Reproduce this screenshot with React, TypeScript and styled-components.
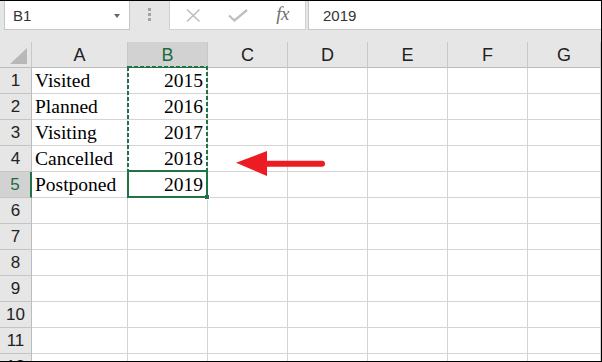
import React from "react";
import styled, { createGlobalStyle } from "styled-components";

const GlobalStyle = createGlobalStyle`
  html, body {
    margin: 0;
    padding: 0;
    background: #ffffff;
  }
  * {
    box-sizing: border-box;
  }
`;

const GREEN = "#217346";

const Frame = styled.div`
  width: 602px;
  height: 362px;
  border-top: 1px solid #000;
  border-right: 1px solid #000;
  border-bottom: 1px solid #000;
  background: #e6e6e6;
  display: flex;
  flex-direction: column;
  overflow: hidden;
  font-family: "Liberation Sans", Arial, sans-serif;
`;

const Toolbar = styled.div`
  height: 41px;
  flex: 0 0 41px;
  display: flex;
  align-items: flex-start;
  padding-left: 4px;
`;

const NameBox = styled.div`
  width: 126px;
  height: 29px;
  background: #fff;
  border: 1px solid #c6c6c6;
  border-top: none;
  display: flex;
  align-items: center;
  justify-content: space-between;
  padding: 1px 9px 0 8px;
  font-size: 15px;
  color: #333;
`;

const DropArrow = styled.span`
  width: 0;
  height: 0;
  border-left: 3.5px solid transparent;
  border-right: 3.5px solid transparent;
  border-top: 4px solid #666;
  margin-top: 1px;
`;

const Handle = styled.div`
  width: 39px;
  display: flex;
  flex-direction: column;
  align-items: center;
  gap: 2px;
  padding-top: 7px;
`;

const Dot = styled.span`
  width: 3px;
  height: 3px;
  background: #a3a3a3;
`;

const FxBox = styled.div`
  width: 137px;
  height: 29px;
  background: #fff;
  border: 1px solid #d0d0d0;
  border-top: none;
  display: flex;
  align-items: center;
`;

const IconSlot = styled.div`
  width: 45px;
  display: flex;
  justify-content: center;
  align-items: center;
`;

const FxLabel = styled.span`
  font-family: "Liberation Serif", "Times New Roman", serif;
  font-style: italic;
  font-size: 19px;
  color: #6f6f6f;
  letter-spacing: -0.5px;
  margin-top: -2px;
`;

const FormulaInput = styled.div`
  flex: 1;
  height: 29px;
  margin-left: 2px;
  background: #fff;
  border-left: 1px solid #c6c6c6;
  border-bottom: 1px solid #c6c6c6;
  display: flex;
  align-items: center;
  padding: 1px 0 0 14px;
  font-size: 15px;
  color: #333;
`;

const Sheet = styled.div`
  position: relative;
  flex: 1;
  display: grid;
  grid-template-columns: 32px 96px repeat(5, 80px) 1fr;
  grid-auto-rows: 26px;
  background: #fff;
  overflow: hidden;
`;

const Corner = styled.div`
  background: #e6e6e6;
  border-right: 1px solid #c8c8c8;
  border-bottom: 1px solid #bcbcbc;
  display: flex;
  align-items: flex-end;
  justify-content: flex-end;
  padding: 0 4px 3px 0;
`;

const CornerTriangle = styled.span`
  width: 17px;
  height: 16px;
  background: #b8b8b8;
  clip-path: polygon(100% 0, 100% 100%, 0 100%);
`;

const ColHead = styled.div<{ $active?: boolean }>`
  background: ${(p) => (p.$active ? "#d2d2d2" : "#e6e6e6")};
  border-right: 1px solid #c8c8c8;
  border-bottom: 1px solid ${(p) => (p.$active ? GREEN : "#bcbcbc")};
  color: ${(p) => (p.$active ? "#1d6a40" : "#222")};
  font-size: 18px;
  line-height: 25px;
  padding-top: 1px;
  text-align: center;
`;

const RowHead = styled.div<{ $active?: boolean }>`
  background: ${(p) => (p.$active ? "#d2d2d2" : "#e6e6e6")};
  border-right: ${(p) => (p.$active ? `2px solid ${GREEN}` : "1px solid #bcbcbc")};
  border-bottom: 1px solid #c4c4c4;
  color: ${(p) => (p.$active ? "#1d6a40" : "#222")};
  font-size: 17px;
  line-height: 25px;
  text-align: center;
`;

const Cell = styled.div<{ $right?: boolean }>`
  border-right: 1px solid #d4d4d4;
  border-bottom: 1px solid #d4d4d4;
  font-family: "Liberation Serif", "Times New Roman", serif;
  font-size: 19.5px;
  line-height: 25px;
  color: #000;
  white-space: nowrap;
  text-align: ${(p) => (p.$right ? "right" : "left")};
  padding: ${(p) => (p.$right ? "0 4px 0 0" : "0 0 0 3px")};
`;

const Marquee = styled.svg`
  position: absolute;
  left: 127px;
  top: 24px;
`;

const ActiveCell = styled.div`
  position: absolute;
  left: 127px;
  top: 128px;
  width: 81px;
  height: 28px;
  border: 2px solid ${GREEN};
`;

const FillHandle = styled.span`
  position: absolute;
  right: -4px;
  bottom: -4px;
  width: 6px;
  height: 6px;
  background: ${GREEN};
  border: 1px solid #fff;
`;

const Arrow = styled.svg`
  position: absolute;
  left: 234px;
  top: 108px;
`;

const columns = ["A", "B", "C", "D", "E", "F", "G"];

const data: [string, string][] = [
  ["Visited", "2015"],
  ["Planned", "2016"],
  ["Visiting", "2017"],
  ["Cancelled", "2018"],
  ["Postponed", "2019"],
];

const ROWS = 12;

const App = () => {
  return (
    <>
      <GlobalStyle />
      <Frame>
        <Toolbar>
          <NameBox>
            B1
            <DropArrow />
          </NameBox>
          <Handle>
            <Dot />
            <Dot />
            <Dot />
          </Handle>
          <FxBox>
            <IconSlot>
              <svg width="16" height="15" viewBox="0 0 16 15">
                <path d="M2 1.5 L14.5 13.5 M14.5 1.5 L2 13.5" stroke="#bdbdbd" strokeWidth="1.5" fill="none" />
              </svg>
            </IconSlot>
            <IconSlot>
              <svg width="20" height="13" viewBox="0 0 20 13">
                <path d="M1 6.5 L6.5 11.5 L19 1" stroke="#bfbfbf" strokeWidth="2.3" fill="none" />
              </svg>
            </IconSlot>
            <IconSlot>
              <FxLabel>fx</FxLabel>
            </IconSlot>
          </FxBox>
          <FormulaInput>2019</FormulaInput>
        </Toolbar>

        <Sheet>
          <Corner>
            <CornerTriangle />
          </Corner>
          {columns.map((c) => (
            <ColHead key={c} $active={c === "B"}>
              {c}
            </ColHead>
          ))}
          {Array.from({ length: ROWS }, (_, i) => {
            const row = data[i];
            return (
              <React.Fragment key={i}>
                <RowHead $active={i === 4}>{i + 1}</RowHead>
                <Cell>{row ? row[0] : ""}</Cell>
                <Cell $right>{row ? row[1] : ""}</Cell>
                <Cell />
                <Cell />
                <Cell />
                <Cell />
                <Cell />
              </React.Fragment>
            );
          })}

          <ActiveCell>
            <FillHandle />
          </ActiveCell>
          <Marquee width="81" height="132" viewBox="0 0 81 132">
            <rect x="1" y="1" width="79" height="130" fill="none" stroke={GREEN} strokeWidth="2" strokeDasharray="4 2" />
          </Marquee>

          <Arrow width="94" height="28" viewBox="0 0 94 28">
            <path d="M30 13.7 L88 13.7" stroke="#ec1c24" strokeWidth="6" strokeLinecap="round" />
            <polygon points="2,12.7 33,1 33,26" fill="#ec1c24" />
          </Arrow>
        </Sheet>
      </Frame>
    </>
  );
};

export default App;
